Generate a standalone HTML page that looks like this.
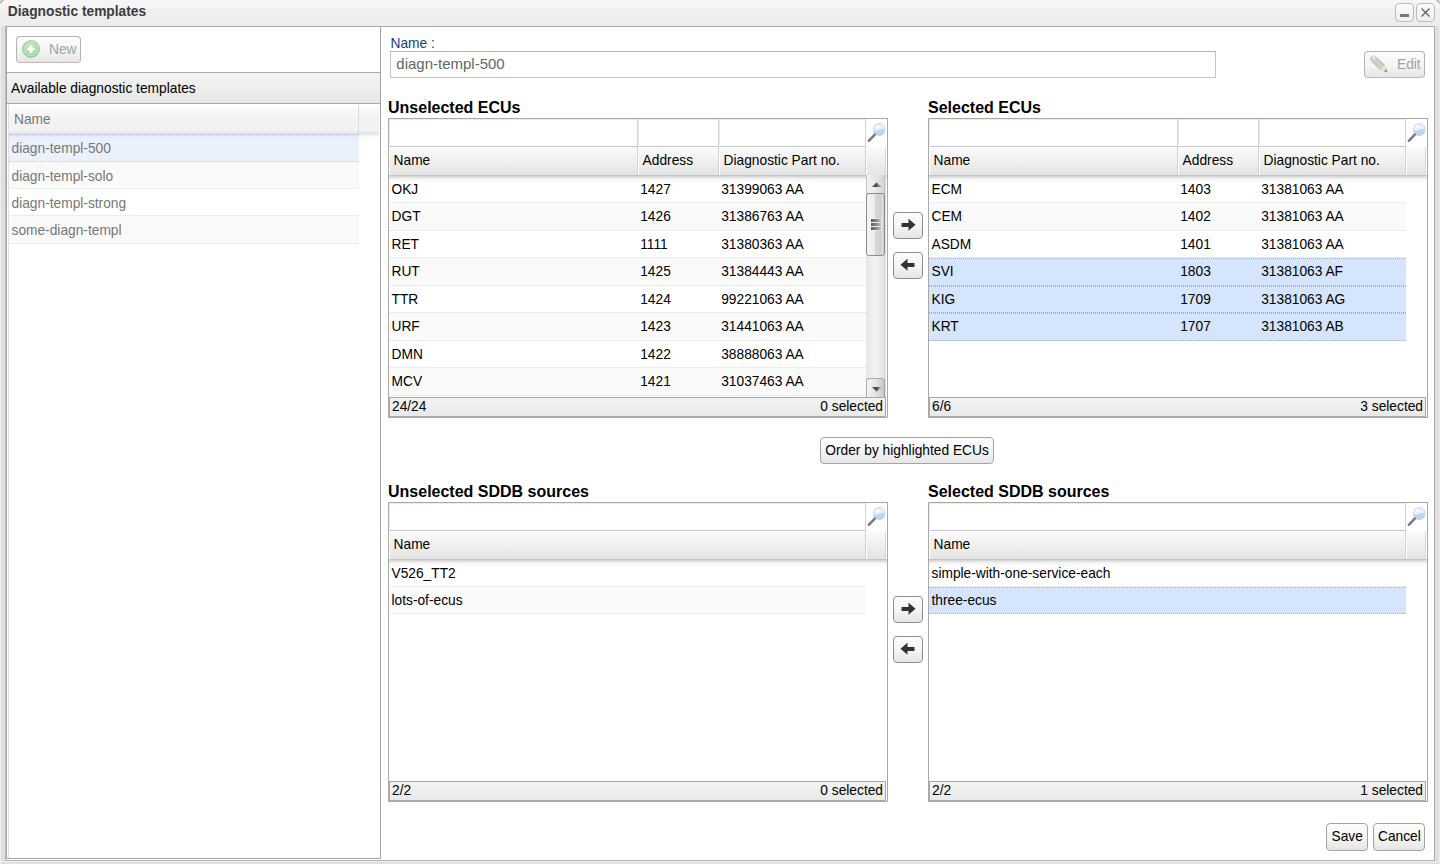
<!DOCTYPE html><html><head><meta charset="utf-8"><style>
*{box-sizing:border-box;margin:0;padding:0}
html,body{width:1440px;height:864px;overflow:hidden;background:#e0e0e0;font-family:"Liberation Sans",sans-serif;font-size:13.75px;color:#000}
.a{position:absolute}
.t{position:absolute;white-space:nowrap}
.btn{position:absolute;border:1px solid #a4a4a4;border-radius:4px;background:linear-gradient(#fdfdfd 0%,#f5f5f5 50%,#e6e6e6 100%)}
.dis{color:#9da2a9}
</style></head><body><div class="a" style="left:0px;top:0px;width:1440px;height:26px;background:linear-gradient(#f6f6f6 0,#f5f5f5 8px,#efefef 9px,#ededed 26px)"></div><svg class="a" style="left:0;top:0" width="4" height="4"><path d="M0.6 3.5 Q0.6 0.6 3.5 0.6" stroke="#a8a8a8" stroke-width="1.3" fill="none"/></svg><svg class="a" style="left:1436px;top:0" width="4" height="4"><path d="M0.5 0.6 Q3.4 0.6 3.4 3.5" stroke="#a8a8a8" stroke-width="1.3" fill="none"/></svg><div class="t " style="left:7.8px;top:3px;line-height:17px;font-size:13.75px;font-weight:bold;color:#3c3c3c">Diagnostic templates</div><div class="a" style="left:1395px;top:3px;width:19px;height:19px;border:1px solid #bcbcbc;border-radius:4px;background:linear-gradient(#fbfbfb,#eeeeee)"></div><div class="a" style="left:1416px;top:3px;width:19px;height:19px;border:1px solid #bcbcbc;border-radius:4px;background:linear-gradient(#fbfbfb,#eeeeee)"></div><div class="a" style="left:1400px;top:14px;width:9px;height:3px;background:#777"></div><svg class="a" style="left:1419px;top:6px" width="13" height="13"><path d="M2.5 2.5L10.5 10.5M10.5 2.5L2.5 10.5" stroke="#666" stroke-width="1.4"/></svg><div class="a" style="left:0px;top:26px;width:1px;height:838px;background:#eeeeee"></div><div class="a" style="left:1439px;top:26px;width:1px;height:838px;background:#ebebeb"></div><div class="a" style="left:0px;top:861px;width:1440px;height:1px;background:#eeeeee"></div><div class="a" style="left:5px;top:26px;width:1430px;height:835px;border:1px solid #ababab;border-left-color:#bcbcbc;border-bottom-color:#b3b3b3;background:#fff"></div><div class="a" style="left:6px;top:27px;width:375px;height:832px;border:1px solid #a3a3a3;border-top:none;background:#fff"></div><div class="btn" style="left:16px;top:36px;width:65px;height:27px;border-color:#b3b3b3 #b3b3b3 #c7b5b5"></div><svg class="a" style="left:21px;top:39px" width="20" height="20"><defs><radialGradient id="gg" cx="45%" cy="40%" r="60%"><stop offset="0" stop-color="#c4e8c4"/><stop offset=".7" stop-color="#a9dba9"/><stop offset="1" stop-color="#93c993"/></radialGradient></defs><circle cx="10" cy="10" r="8.6" fill="url(#gg)" stroke="#a6cfa6" stroke-width=".8"/><circle cx="10" cy="10" r="6.6" fill="none" stroke="#d2eed2" stroke-width=".8" opacity=".8"/><path d="M10 6.3v7.4M6.3 10h7.4" stroke="#fff" stroke-width="2.7"/></svg><div class="t dis" style="left:49px;top:41px;line-height:17px;font-size:13.75px;">New</div><div class="a" style="left:7px;top:72px;width:373px;height:1px;background:#a9a9a9"></div><div class="a" style="left:7px;top:73px;width:373px;height:31px;background:linear-gradient(#f4f4f4,#e7e7e7);border-bottom:1px solid #a9a9a9"></div><div class="t " style="left:11px;top:80px;line-height:17px;font-size:13.75px;">Available diagnostic templates</div><div class="a" style="left:8px;top:104px;width:372px;height:754px;border-left:1px solid #e0e0e0;background:#fff"></div><div class="a" style="left:9px;top:104px;width:350px;height:30px;background:linear-gradient(#fff 0,#f7f7f7 8px,#f2f2f2 16px,#f2f2f2 27px,#e0e0e0 30px);border-right:1px solid #dcdcdc"></div><div class="a" style="left:359px;top:104px;width:20px;height:30px;background:linear-gradient(#fff 0,#f7f7f7 8px,#f2f2f2 16px,#f2f2f2 27px,#e0e0e0 30px)"></div><div class="t " style="left:14px;top:111px;line-height:17px;font-size:13.75px;color:#777">Name</div><div class="a" style="left:9px;top:134px;width:350px;height:28px;background:#eaf1fd;border-top:1px dotted #c3d2f0;border-bottom:1px dotted #c3d2f0"></div><div class="t " style="left:11.5px;top:140px;line-height:17px;font-size:13.75px;color:#777">diagn-templ-500</div><div class="a" style="left:9px;top:162px;width:350px;height:27px;background:#fafafa;border-bottom:1px solid #ededed"></div><div class="t " style="left:11.5px;top:168px;line-height:17px;font-size:13.75px;color:#777">diagn-templ-solo</div><div class="a" style="left:9px;top:189px;width:350px;height:27px;background:#fff;border-bottom:1px solid #ededed"></div><div class="t " style="left:11.5px;top:195px;line-height:17px;font-size:13.75px;color:#777">diagn-templ-strong</div><div class="a" style="left:9px;top:216px;width:350px;height:28px;background:#fafafa;border-bottom:1px solid #ededed"></div><div class="t " style="left:11.5px;top:222px;line-height:17px;font-size:13.75px;color:#777">some-diagn-templ</div><div class="a" style="left:9px;top:134px;width:370px;height:4px;background:linear-gradient(rgba(0,0,0,.09),rgba(0,0,0,.03) 2px,rgba(0,0,0,0))"></div><div class="t " style="left:390.5px;top:35px;line-height:17px;font-size:13.75px;color:#123f80">Name :</div><div class="a" style="left:390px;top:51px;width:826px;height:27px;border:1px solid #c3c3c3;border-top-color:#b5b5b5;background:#fff"></div><div class="t " style="left:396.3px;top:55px;line-height:18px;font-size:15px;color:#666">diagn-templ-500</div><div class="btn" style="left:1364px;top:51px;width:61px;height:27px;border-color:#b3b3b3 #b3b3b3 #c7b5b5"></div><svg class="a" style="left:1366px;top:51px" width="26" height="26"><g transform="translate(13.2,13.4) rotate(44)"><rect x="-11.2" y="-3.3" width="6" height="6.6" rx="2.8" fill="#dccaca"/><rect x="-9.8" y="-2.1" width="2.6" height="2.3" rx="1" fill="#fff" opacity=".9"/><rect x="-7.2" y="-3.3" width="12" height="6.6" fill="#c6d9c0"/><rect x="-7.2" y="-3.3" width="12" height="1.1" fill="#b0c7aa"/><rect x="-7.2" y="2.2" width="12" height="1.1" fill="#b0c7aa"/><path d="M4.8 -3.3L9.4 -1.4V1.4L4.8 3.3z" fill="#e8e0da"/><path d="M8.4 -1.9L11.3 0L8.4 1.9z" fill="#8e8e8e"/></g></svg><div class="t dis" style="left:1397px;top:56px;line-height:17px;font-size:13.75px;">Edit</div><div class="t " style="left:388px;top:98px;line-height:20px;font-size:16px;font-weight:bold;">Unselected ECUs</div><div class="t " style="left:928px;top:98px;line-height:20px;font-size:16px;font-weight:bold;">Selected ECUs</div><div class="a" style="left:388px;top:118px;width:500px;height:300px;border:1px solid #a9a9a9;background:#fff"></div><div class="a" style="left:389px;top:119px;width:249px;height:28px;border-right:1px solid #d4d4d4;border-bottom:1px solid #c7c7c7;border-left:1px solid #ececec;border-top:1px solid #ececec"></div><div class="a" style="left:638px;top:119px;width:81px;height:28px;border-right:1px solid #d4d4d4;border-bottom:1px solid #c7c7c7;border-left:1px solid #ececec;border-top:1px solid #ececec"></div><div class="a" style="left:719px;top:119px;width:147px;height:28px;border-right:1px solid #d4d4d4;border-bottom:1px solid #c7c7c7;border-left:1px solid #ececec;border-top:1px solid #ececec"></div><svg class="a" style="left:866px;top:121px" width="21" height="23"><circle cx="13.3" cy="8.6" r="6" fill="#e6f1fa" stroke="#c8d8e8" stroke-width="1"/><path d="M7.8 9 A5.5 5.5 0 0 0 18.8 9 Q16.5 7.2 13.5 8.8 Q10.5 10.5 7.8 9z" fill="#bcd6ef"/><ellipse cx="12" cy="6" rx="2.6" ry="1.4" fill="#fff" opacity=".7"/><path d="M8.8 13.6L2.8 19.8" stroke="#7a7a7a" stroke-width="2.4" stroke-linecap="round"/></svg><div class="a" style="left:389px;top:147px;width:249px;height:28px;background:linear-gradient(#fbfbfb,#e4e4e4);border-right:1px solid #d2d2d2;border-left:1px solid #fff"></div><div class="t " style="left:393.6px;top:152px;line-height:17px;font-size:13.75px;">Name</div><div class="a" style="left:638px;top:147px;width:81px;height:28px;background:linear-gradient(#fbfbfb,#e4e4e4);border-right:1px solid #d2d2d2;border-left:1px solid #fff"></div><div class="t " style="left:642.6px;top:152px;line-height:17px;font-size:13.75px;">Address</div><div class="a" style="left:719px;top:147px;width:147px;height:28px;background:linear-gradient(#fbfbfb,#e4e4e4);border-right:1px solid #d2d2d2;border-left:1px solid #fff"></div><div class="t " style="left:723.6px;top:152px;line-height:17px;font-size:13.75px;">Diagnostic Part no.</div><div class="a" style="left:866px;top:147px;width:20px;height:28px;background:linear-gradient(#fbfbfb,#e4e4e4);border-left:1px solid #fff;border-right:1px solid #d8d8d8"></div><div class="a" style="left:389px;top:176px;width:477px;height:27px;background:#fff;border-bottom:1px solid #ededed"></div><div class="t " style="left:391.5px;top:181px;line-height:17px;font-size:13.75px;">OKJ</div><div class="t " style="left:640.2px;top:181px;line-height:17px;font-size:13.75px;">1427</div><div class="t " style="left:721.2px;top:181px;line-height:17px;font-size:13.75px;">31399063 AA</div><div class="a" style="left:389px;top:203px;width:477px;height:28px;background:#fafafa;border-bottom:1px solid #ededed"></div><div class="t " style="left:391.5px;top:208px;line-height:17px;font-size:13.75px;">DGT</div><div class="t " style="left:640.2px;top:208px;line-height:17px;font-size:13.75px;">1426</div><div class="t " style="left:721.2px;top:208px;line-height:17px;font-size:13.75px;">31386763 AA</div><div class="a" style="left:389px;top:231px;width:477px;height:27px;background:#fff;border-bottom:1px solid #ededed"></div><div class="t " style="left:391.5px;top:236px;line-height:17px;font-size:13.75px;">RET</div><div class="t " style="left:640.2px;top:236px;line-height:17px;font-size:13.75px;">1111</div><div class="t " style="left:721.2px;top:236px;line-height:17px;font-size:13.75px;">31380363 AA</div><div class="a" style="left:389px;top:258px;width:477px;height:28px;background:#fafafa;border-bottom:1px solid #ededed"></div><div class="t " style="left:391.5px;top:263px;line-height:17px;font-size:13.75px;">RUT</div><div class="t " style="left:640.2px;top:263px;line-height:17px;font-size:13.75px;">1425</div><div class="t " style="left:721.2px;top:263px;line-height:17px;font-size:13.75px;">31384443 AA</div><div class="a" style="left:389px;top:286px;width:477px;height:27px;background:#fff;border-bottom:1px solid #ededed"></div><div class="t " style="left:391.5px;top:291px;line-height:17px;font-size:13.75px;">TTR</div><div class="t " style="left:640.2px;top:291px;line-height:17px;font-size:13.75px;">1424</div><div class="t " style="left:721.2px;top:291px;line-height:17px;font-size:13.75px;">99221063 AA</div><div class="a" style="left:389px;top:313px;width:477px;height:28px;background:#fafafa;border-bottom:1px solid #ededed"></div><div class="t " style="left:391.5px;top:318px;line-height:17px;font-size:13.75px;">URF</div><div class="t " style="left:640.2px;top:318px;line-height:17px;font-size:13.75px;">1423</div><div class="t " style="left:721.2px;top:318px;line-height:17px;font-size:13.75px;">31441063 AA</div><div class="a" style="left:389px;top:341px;width:477px;height:27px;background:#fff;border-bottom:1px solid #ededed"></div><div class="t " style="left:391.5px;top:346px;line-height:17px;font-size:13.75px;">DMN</div><div class="t " style="left:640.2px;top:346px;line-height:17px;font-size:13.75px;">1422</div><div class="t " style="left:721.2px;top:346px;line-height:17px;font-size:13.75px;">38888063 AA</div><div class="a" style="left:389px;top:368px;width:477px;height:28px;background:#fafafa;border-bottom:1px solid #ededed"></div><div class="t " style="left:391.5px;top:373px;line-height:17px;font-size:13.75px;">MCV</div><div class="t " style="left:640.2px;top:373px;line-height:17px;font-size:13.75px;">1421</div><div class="t " style="left:721.2px;top:373px;line-height:17px;font-size:13.75px;">31037463 AA</div><div class="a" style="left:389px;top:175px;width:498px;height:8px;background:linear-gradient(rgba(0,0,0,.26),rgba(0,0,0,.16) 1.5px,rgba(0,0,0,.07) 3px,rgba(0,0,0,.025) 5px,rgba(0,0,0,0) 8px)"></div><div class="a" style="left:389px;top:397px;width:497px;height:20px;border:1px solid #a9a9a9;background:linear-gradient(#f3f3f3,#e9e9e9)"></div><div class="t " style="left:392px;top:398px;line-height:17px;font-size:13.75px;">24/24</div><div class="t " style="right:557px;text-align:right;top:398px;line-height:17px;font-size:13.75px;">0 selected</div><div class="a" style="left:866px;top:175px;width:20px;height:222px;background:linear-gradient(90deg,#e6e6e6,#f1f1f1 40%,#ececec 70%,#dedede)"></div><div class="a" style="left:866px;top:175px;width:19px;height:19px;border-left:1px solid #c4c4c4;border-right:1px solid #c4c4c4;border-bottom:1px solid #b0b0b0;background:linear-gradient(90deg,#f3f3f3,#e9e9e9 50%,#d4d4d4)"></div><svg class="a" style="left:871px;top:181px" width="11" height="7"><path d="M1 6L5.5 1.5L10 6z" fill="#4a4a4a"/><path d="M5.5 1.5L10 6H7z" fill="#8a8a8a"/></svg><div class="a" style="left:866px;top:193px;width:19px;height:63px;border:1px solid #8c8c8c;border-radius:3px 3px 3px 3px;background:linear-gradient(90deg,#f4f4f4,#ececec 48%,#d6d6d6 50%,#d0d0d0 84%,#e4e4e4 88%,#c8c8c8)"></div><div class="a" style="left:870px;top:218px;width:12px;height:13px;background:rgba(255,255,255,.35)"></div><div class="a" style="left:871px;top:219px;width:10px;height:2.5px;background:linear-gradient(90deg,#555,#a5a5a5 80%,#c8c8c8)"></div><div class="a" style="left:871px;top:223px;width:10px;height:2.5px;background:linear-gradient(90deg,#555,#a5a5a5 80%,#c8c8c8)"></div><div class="a" style="left:871px;top:227px;width:10px;height:2.5px;background:linear-gradient(90deg,#555,#a5a5a5 80%,#c8c8c8)"></div><div class="a" style="left:866px;top:378px;width:19px;height:19px;border:1px solid #a9a9a9;border-bottom:none;border-radius:3px 3px 0 0;background:linear-gradient(90deg,#f4f4f4,#e6e6e6 45%,#cfcfcf 90%,#bdbdbd)"></div><svg class="a" style="left:871px;top:386px" width="11" height="6"><path d="M1 1H10L5.5 5.5z" fill="#4a4a4a"/><path d="M5.5 5.5L10 1H7.5z" fill="#8a8a8a"/></svg><div class="a" style="left:928px;top:118px;width:500px;height:300px;border:1px solid #a9a9a9;background:#fff"></div><div class="a" style="left:929px;top:119px;width:249px;height:28px;border-right:1px solid #d4d4d4;border-bottom:1px solid #c7c7c7;border-left:1px solid #ececec;border-top:1px solid #ececec"></div><div class="a" style="left:1178px;top:119px;width:81px;height:28px;border-right:1px solid #d4d4d4;border-bottom:1px solid #c7c7c7;border-left:1px solid #ececec;border-top:1px solid #ececec"></div><div class="a" style="left:1259px;top:119px;width:147px;height:28px;border-right:1px solid #d4d4d4;border-bottom:1px solid #c7c7c7;border-left:1px solid #ececec;border-top:1px solid #ececec"></div><svg class="a" style="left:1406px;top:121px" width="21" height="23"><circle cx="13.3" cy="8.6" r="6" fill="#e6f1fa" stroke="#c8d8e8" stroke-width="1"/><path d="M7.8 9 A5.5 5.5 0 0 0 18.8 9 Q16.5 7.2 13.5 8.8 Q10.5 10.5 7.8 9z" fill="#bcd6ef"/><ellipse cx="12" cy="6" rx="2.6" ry="1.4" fill="#fff" opacity=".7"/><path d="M8.8 13.6L2.8 19.8" stroke="#7a7a7a" stroke-width="2.4" stroke-linecap="round"/></svg><div class="a" style="left:929px;top:147px;width:249px;height:28px;background:linear-gradient(#fbfbfb,#e4e4e4);border-right:1px solid #d2d2d2;border-left:1px solid #fff"></div><div class="t " style="left:933.6px;top:152px;line-height:17px;font-size:13.75px;">Name</div><div class="a" style="left:1178px;top:147px;width:81px;height:28px;background:linear-gradient(#fbfbfb,#e4e4e4);border-right:1px solid #d2d2d2;border-left:1px solid #fff"></div><div class="t " style="left:1182.6px;top:152px;line-height:17px;font-size:13.75px;">Address</div><div class="a" style="left:1259px;top:147px;width:147px;height:28px;background:linear-gradient(#fbfbfb,#e4e4e4);border-right:1px solid #d2d2d2;border-left:1px solid #fff"></div><div class="t " style="left:1263.6px;top:152px;line-height:17px;font-size:13.75px;">Diagnostic Part no.</div><div class="a" style="left:1406px;top:147px;width:20px;height:28px;background:linear-gradient(#fbfbfb,#e4e4e4);border-left:1px solid #fff;border-right:1px solid #d8d8d8"></div><div class="a" style="left:929px;top:176px;width:477px;height:27px;background:#fff;border-bottom:1px solid #ededed"></div><div class="t " style="left:931.5px;top:181px;line-height:17px;font-size:13.75px;">ECM</div><div class="t " style="left:1180.2px;top:181px;line-height:17px;font-size:13.75px;">1403</div><div class="t " style="left:1261.2px;top:181px;line-height:17px;font-size:13.75px;">31381063 AA</div><div class="a" style="left:929px;top:203px;width:477px;height:28px;background:#fafafa;border-bottom:1px solid #ededed"></div><div class="t " style="left:931.5px;top:208px;line-height:17px;font-size:13.75px;">CEM</div><div class="t " style="left:1180.2px;top:208px;line-height:17px;font-size:13.75px;">1402</div><div class="t " style="left:1261.2px;top:208px;line-height:17px;font-size:13.75px;">31381063 AA</div><div class="a" style="left:929px;top:231px;width:477px;height:27px;background:#fff;border-bottom:1px solid #ededed"></div><div class="t " style="left:931.5px;top:236px;line-height:17px;font-size:13.75px;">ASDM</div><div class="t " style="left:1180.2px;top:236px;line-height:17px;font-size:13.75px;">1401</div><div class="t " style="left:1261.2px;top:236px;line-height:17px;font-size:13.75px;">31381063 AA</div><div class="a" style="left:929px;top:258px;width:477px;height:28px;background:#d4e5fd;border-top:1px dotted #98b1e7;border-bottom:1px dotted #98b1e7"></div><div class="t " style="left:931.5px;top:263px;line-height:17px;font-size:13.75px;">SVI</div><div class="t " style="left:1180.2px;top:263px;line-height:17px;font-size:13.75px;">1803</div><div class="t " style="left:1261.2px;top:263px;line-height:17px;font-size:13.75px;">31381063 AF</div><div class="a" style="left:929px;top:286px;width:477px;height:27px;background:#d4e5fd;border-top:1px dotted #98b1e7;border-bottom:1px dotted #98b1e7"></div><div class="t " style="left:931.5px;top:291px;line-height:17px;font-size:13.75px;">KIG</div><div class="t " style="left:1180.2px;top:291px;line-height:17px;font-size:13.75px;">1709</div><div class="t " style="left:1261.2px;top:291px;line-height:17px;font-size:13.75px;">31381063 AG</div><div class="a" style="left:929px;top:313px;width:477px;height:28px;background:#d4e5fd;border-top:1px dotted #98b1e7;border-bottom:1px dotted #98b1e7"></div><div class="t " style="left:931.5px;top:318px;line-height:17px;font-size:13.75px;">KRT</div><div class="t " style="left:1180.2px;top:318px;line-height:17px;font-size:13.75px;">1707</div><div class="t " style="left:1261.2px;top:318px;line-height:17px;font-size:13.75px;">31381063 AB</div><div class="a" style="left:929px;top:175px;width:498px;height:8px;background:linear-gradient(rgba(0,0,0,.26),rgba(0,0,0,.16) 1.5px,rgba(0,0,0,.07) 3px,rgba(0,0,0,.025) 5px,rgba(0,0,0,0) 8px)"></div><div class="a" style="left:929px;top:397px;width:497px;height:20px;border:1px solid #a9a9a9;background:linear-gradient(#f3f3f3,#e9e9e9)"></div><div class="t " style="left:932px;top:398px;line-height:17px;font-size:13.75px;">6/6</div><div class="t " style="right:17px;text-align:right;top:398px;line-height:17px;font-size:13.75px;">3 selected</div><div class="btn" style="left:893px;top:212px;width:30px;height:27px;border-color:#8d8d8d"></div><svg class="a" style="left:900px;top:218px" width="16" height="14"><path d="M1.5 5H8.5V0.8L15.5 6.8L8.5 12.8V9H1.5z" fill="#333"/></svg><div class="btn" style="left:893px;top:252px;width:30px;height:27px;border-color:#8d8d8d"></div><svg class="a" style="left:900px;top:258px" width="16" height="14"><path d="M14.5 5H7.5V0.8L0.5 6.8L7.5 12.8V9H14.5z" fill="#333"/></svg><div class="btn" style="left:820px;top:437px;width:174px;height:27px"></div><div class="t " style="left:825.3px;top:442px;line-height:17px;font-size:13.75px;">Order by highlighted ECUs</div><div class="t " style="left:388px;top:482px;line-height:20px;font-size:16px;font-weight:bold;">Unselected SDDB sources</div><div class="t " style="left:928px;top:482px;line-height:20px;font-size:16px;font-weight:bold;">Selected SDDB sources</div><div class="a" style="left:388px;top:502px;width:500px;height:300px;border:1px solid #a9a9a9;background:#fff"></div><div class="a" style="left:389px;top:503px;width:477px;height:28px;border-right:1px solid #d4d4d4;border-bottom:1px solid #c7c7c7;border-left:1px solid #ececec;border-top:1px solid #ececec"></div><svg class="a" style="left:866px;top:505px" width="21" height="23"><circle cx="13.3" cy="8.6" r="6" fill="#e6f1fa" stroke="#c8d8e8" stroke-width="1"/><path d="M7.8 9 A5.5 5.5 0 0 0 18.8 9 Q16.5 7.2 13.5 8.8 Q10.5 10.5 7.8 9z" fill="#bcd6ef"/><ellipse cx="12" cy="6" rx="2.6" ry="1.4" fill="#fff" opacity=".7"/><path d="M8.8 13.6L2.8 19.8" stroke="#7a7a7a" stroke-width="2.4" stroke-linecap="round"/></svg><div class="a" style="left:389px;top:531px;width:477px;height:28px;background:linear-gradient(#fbfbfb,#e4e4e4);border-right:1px solid #d2d2d2;border-left:1px solid #fff"></div><div class="t " style="left:393.6px;top:536px;line-height:17px;font-size:13.75px;">Name</div><div class="a" style="left:866px;top:531px;width:20px;height:28px;background:linear-gradient(#fbfbfb,#e4e4e4);border-left:1px solid #fff;border-right:1px solid #d8d8d8"></div><div class="a" style="left:389px;top:559px;width:477px;height:28px;background:#fff;border-bottom:1px solid #ededed"></div><div class="t " style="left:391.5px;top:565px;line-height:17px;font-size:13.75px;">V526_TT2</div><div class="a" style="left:389px;top:587px;width:477px;height:27px;background:#fafafa;border-bottom:1px solid #ededed"></div><div class="t " style="left:391.5px;top:592px;line-height:17px;font-size:13.75px;">lots-of-ecus</div><div class="a" style="left:389px;top:559px;width:498px;height:8px;background:linear-gradient(rgba(0,0,0,.26),rgba(0,0,0,.16) 1.5px,rgba(0,0,0,.07) 3px,rgba(0,0,0,.025) 5px,rgba(0,0,0,0) 8px)"></div><div class="a" style="left:389px;top:781px;width:497px;height:20px;border:1px solid #a9a9a9;background:linear-gradient(#f3f3f3,#e9e9e9)"></div><div class="t " style="left:392px;top:782px;line-height:17px;font-size:13.75px;">2/2</div><div class="t " style="right:557px;text-align:right;top:782px;line-height:17px;font-size:13.75px;">0 selected</div><div class="a" style="left:928px;top:502px;width:500px;height:300px;border:1px solid #a9a9a9;background:#fff"></div><div class="a" style="left:929px;top:503px;width:477px;height:28px;border-right:1px solid #d4d4d4;border-bottom:1px solid #c7c7c7;border-left:1px solid #ececec;border-top:1px solid #ececec"></div><svg class="a" style="left:1406px;top:505px" width="21" height="23"><circle cx="13.3" cy="8.6" r="6" fill="#e6f1fa" stroke="#c8d8e8" stroke-width="1"/><path d="M7.8 9 A5.5 5.5 0 0 0 18.8 9 Q16.5 7.2 13.5 8.8 Q10.5 10.5 7.8 9z" fill="#bcd6ef"/><ellipse cx="12" cy="6" rx="2.6" ry="1.4" fill="#fff" opacity=".7"/><path d="M8.8 13.6L2.8 19.8" stroke="#7a7a7a" stroke-width="2.4" stroke-linecap="round"/></svg><div class="a" style="left:929px;top:531px;width:477px;height:28px;background:linear-gradient(#fbfbfb,#e4e4e4);border-right:1px solid #d2d2d2;border-left:1px solid #fff"></div><div class="t " style="left:933.6px;top:536px;line-height:17px;font-size:13.75px;">Name</div><div class="a" style="left:1406px;top:531px;width:20px;height:28px;background:linear-gradient(#fbfbfb,#e4e4e4);border-left:1px solid #fff;border-right:1px solid #d8d8d8"></div><div class="a" style="left:929px;top:559px;width:477px;height:28px;background:#fff;border-bottom:1px solid #ededed"></div><div class="t " style="left:931.5px;top:565px;line-height:17px;font-size:13.75px;">simple-with-one-service-each</div><div class="a" style="left:929px;top:587px;width:477px;height:27px;background:#d4e5fd;border-top:1px dotted #98b1e7;border-bottom:1px dotted #98b1e7"></div><div class="t " style="left:931.5px;top:592px;line-height:17px;font-size:13.75px;">three-ecus</div><div class="a" style="left:929px;top:559px;width:498px;height:8px;background:linear-gradient(rgba(0,0,0,.26),rgba(0,0,0,.16) 1.5px,rgba(0,0,0,.07) 3px,rgba(0,0,0,.025) 5px,rgba(0,0,0,0) 8px)"></div><div class="a" style="left:929px;top:781px;width:497px;height:20px;border:1px solid #a9a9a9;background:linear-gradient(#f3f3f3,#e9e9e9)"></div><div class="t " style="left:932px;top:782px;line-height:17px;font-size:13.75px;">2/2</div><div class="t " style="right:17px;text-align:right;top:782px;line-height:17px;font-size:13.75px;">1 selected</div><div class="btn" style="left:893px;top:596px;width:30px;height:27px;border-color:#8d8d8d"></div><svg class="a" style="left:900px;top:602px" width="16" height="14"><path d="M1.5 5H8.5V0.8L15.5 6.8L8.5 12.8V9H1.5z" fill="#333"/></svg><div class="btn" style="left:893px;top:636px;width:30px;height:27px;border-color:#8d8d8d"></div><svg class="a" style="left:900px;top:642px" width="16" height="14"><path d="M14.5 5H7.5V0.8L0.5 6.8L7.5 12.8V9H14.5z" fill="#333"/></svg><div class="btn" style="left:1326px;top:823px;width:42px;height:28px"></div><div class="t " style="left:1331.5px;top:828px;line-height:17px;font-size:13.75px;">Save</div><div class="btn" style="left:1373px;top:823px;width:52px;height:28px"></div><div class="t " style="left:1378px;top:828px;line-height:17px;font-size:13.75px;">Cancel</div></body></html>
